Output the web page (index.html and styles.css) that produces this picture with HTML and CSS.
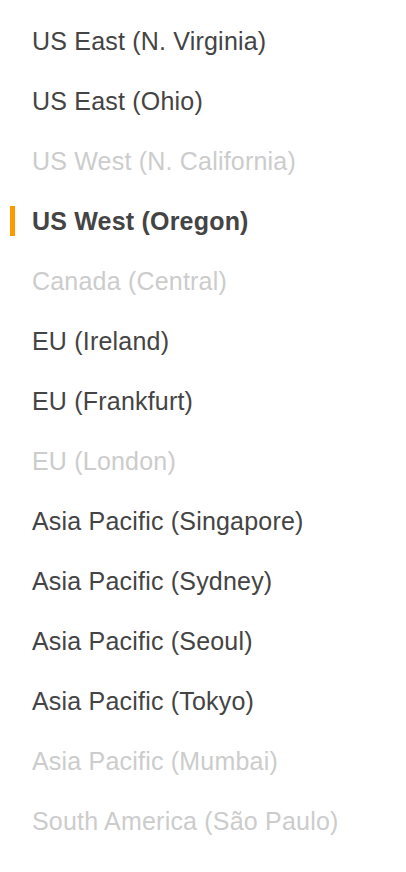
FILE: index.html
```html
<!DOCTYPE html>
<html lang="en">
<head>
    <meta charset="UTF-8">
    <title>Regions</title>
    <link rel="stylesheet" href="styles.css">
</head>
<body>

    <ul class="regionList">
        <li class="region">US East (N. Virginia)</li>
        <li class="region">US East (Ohio)</li>
        <li class="region disabled">US West (N. California)</li>
        <li class="region active">US West (Oregon)</li>
        <li class="region disabled">Canada (Central)</li>
        <li class="region">EU (Ireland)</li>
        <li class="region">EU (Frankfurt)</li>
        <li class="region disabled">EU (London)</li>
        <li class="region">Asia Pacific (Singapore)</li>
        <li class="region">Asia Pacific (Sydney)</li>
        <li class="region">Asia Pacific (Seoul)</li>
        <li class="region">Asia Pacific (Tokyo)</li>
        <li class="region disabled">Asia Pacific (Mumbai)</li>
        <li class="region disabled">South America (São Paulo)</li>
    </ul>

</body>
</html>
```

FILE: styles.css
```css
body {
    margin: 0;
    background-color: #fff;
    font-family: "Liberation Sans", Arial, sans-serif;
}

.regionList {
    list-style: none;
    margin: 0;
    padding: 11px 0 0 0;
}

.region {
    position: relative;
    height: 60px;
    line-height: 60px;
    padding-left: 32px;
    font-size: 25px;
    color: #444;
    letter-spacing: 0.2px;
}

.region.disabled {
    color: #ccc;
}

.region.active {
    font-weight: bold;
}

.region.active::before {
    content: "";
    position: absolute;
    left: 10px;
    top: 15px;
    width: 5px;
    height: 30px;
    background-color: #f90;
}
```
